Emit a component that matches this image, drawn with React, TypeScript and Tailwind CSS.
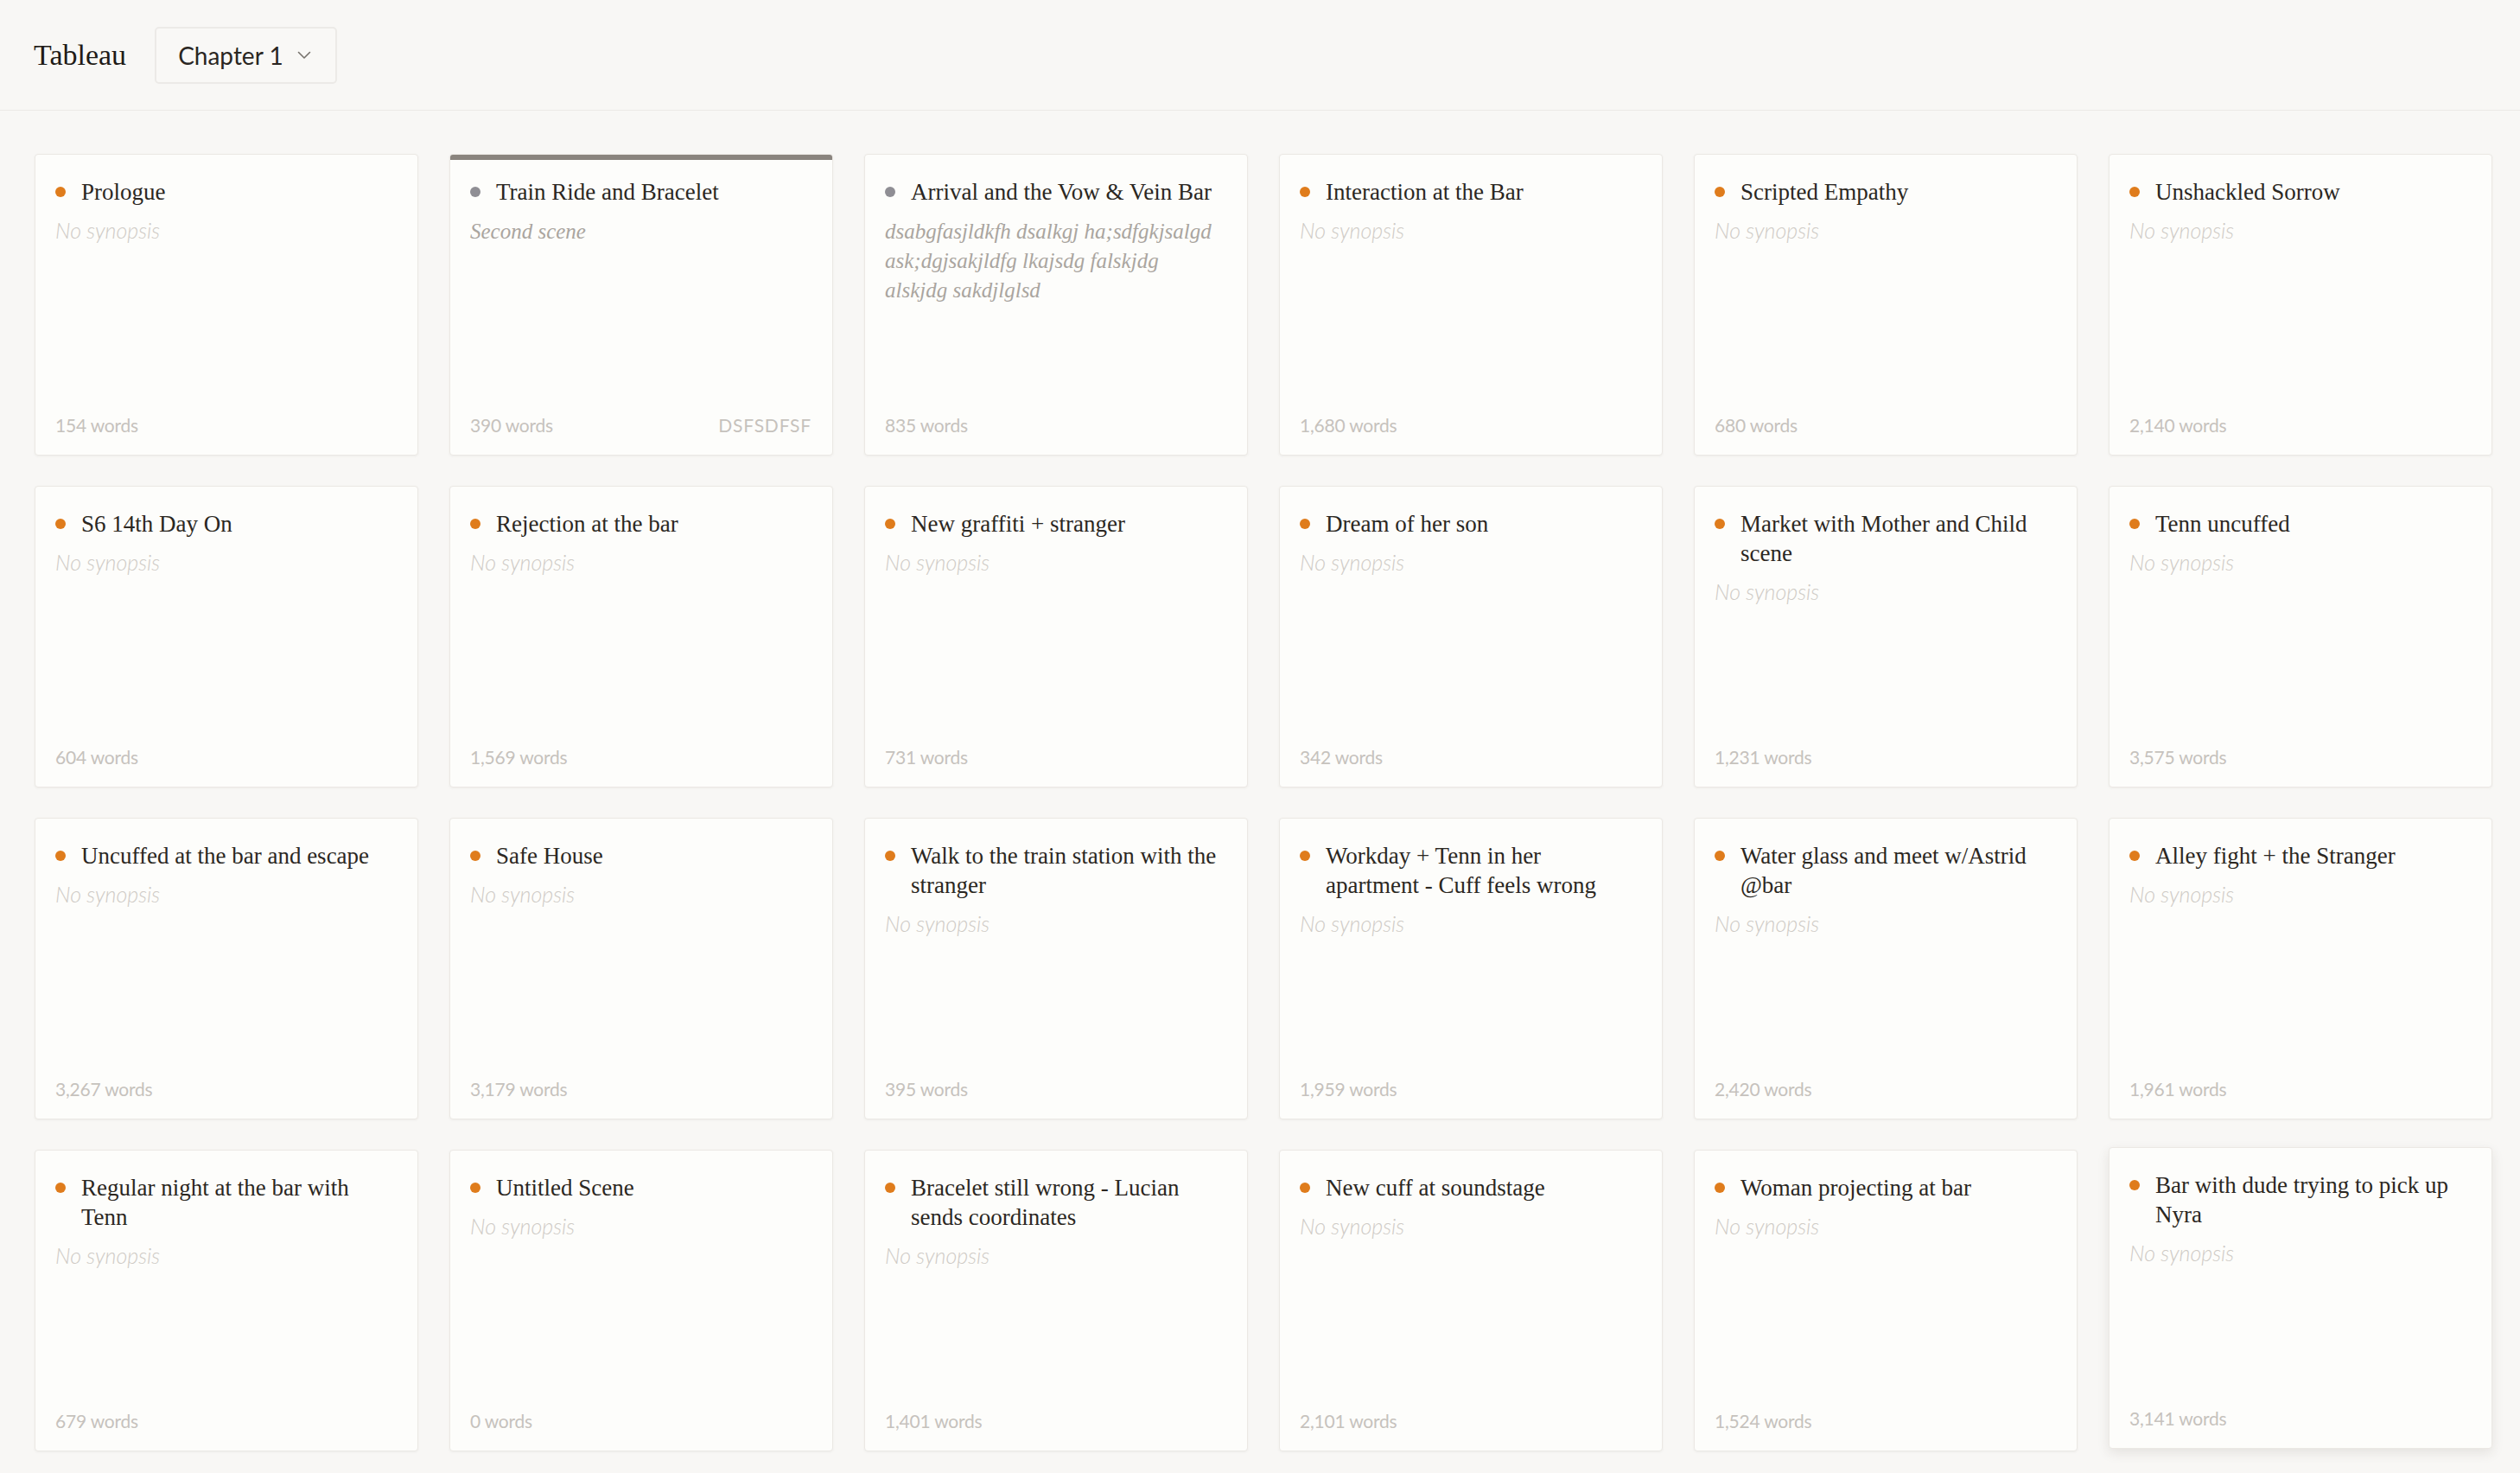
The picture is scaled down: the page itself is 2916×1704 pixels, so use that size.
import React from "react";

type Scene = {
  title: string;
  words: string;
  synopsis?: string;
  dot: "orange" | "gray";
  tag?: string;
  selected?: boolean;
  hovered?: boolean;
};

const scenes: Scene[] = [
  { title: "Prologue", words: "154 words", dot: "orange" },
  { title: "Train Ride and Bracelet", words: "390 words", dot: "gray", synopsis: "Second scene", tag: "DSFSDFSF", selected: true },
  {
    title: "Arrival and the Vow & Vein Bar",
    words: "835 words",
    dot: "gray",
    synopsis: "dsabgfasjldkfh dsalkgj ha;sdfgkjsalgd ask;dgjsakjldfg lkajsdg falskjdg alskjdg sakdjlglsd",
  },
  { title: "Interaction at the Bar", words: "1,680 words", dot: "orange" },
  { title: "Scripted Empathy", words: "680 words", dot: "orange" },
  { title: "Unshackled Sorrow", words: "2,140 words", dot: "orange" },
  { title: "S6 14th Day On", words: "604 words", dot: "orange" },
  { title: "Rejection at the bar", words: "1,569 words", dot: "orange" },
  { title: "New graffiti + stranger", words: "731 words", dot: "orange" },
  { title: "Dream of her son", words: "342 words", dot: "orange" },
  { title: "Market with Mother and Child scene", words: "1,231 words", dot: "orange" },
  { title: "Tenn uncuffed", words: "3,575 words", dot: "orange" },
  { title: "Uncuffed at the bar and escape", words: "3,267 words", dot: "orange" },
  { title: "Safe House", words: "3,179 words", dot: "orange" },
  { title: "Walk to the train station with the stranger", words: "395 words", dot: "orange" },
  { title: "Workday + Tenn in her apartment - Cuff feels wrong", words: "1,959 words", dot: "orange" },
  { title: "Water glass and meet w/Astrid @bar", words: "2,420 words", dot: "orange" },
  { title: "Alley fight + the Stranger", words: "1,961 words", dot: "orange" },
  { title: "Regular night at the bar with Tenn", words: "679 words", dot: "orange" },
  { title: "Untitled Scene", words: "0 words", dot: "orange" },
  { title: "Bracelet still wrong - Lucian sends coordinates", words: "1,401 words", dot: "orange" },
  { title: "New cuff at soundstage", words: "2,101 words", dot: "orange" },
  { title: "Woman projecting at bar", words: "1,524 words", dot: "orange" },
  { title: "Bar with dude trying to pick up Nyra", words: "3,141 words", dot: "orange", hovered: true },
];

const serif = "font-['Liberation_Serif',_'Times_New_Roman',_serif]";
const sans = "font-['Lato',_'Noto_Sans',_sans-serif]";

function Card({ s }: { s: Scene }) {
  return (
    <div
      className={
        "relative flex h-[349px] flex-col overflow-hidden rounded-[4px] border border-[#ebe8e4] bg-[#fdfdfb] pb-[20px] pl-[23px] pr-[24px] pt-[26px] " +
        (s.hovered
          ? "-translate-y-[3px] shadow-[0_5px_14px_rgba(60,50,40,0.10)]"
          : "shadow-[0_1px_3px_rgba(60,50,40,0.05)]")
      }
    >
      {s.selected && <div className="absolute inset-x-0 top-0 h-[6px] bg-[#8a847e]" />}
      <div className="flex items-start">
        <div className="flex h-[34px] w-[30px] shrink-0 items-center">
          <span
            className={
              "block h-[12px] w-[12px] rounded-full " +
              (s.dot === "orange" ? "bg-[#df7c1c]" : "bg-[#8f8e94]")
            }
          />
        </div>
        <div className={`${serif} max-w-[360px] text-[27px] leading-[34px] text-[#2b2722]`}>{s.title}</div>
      </div>
      {s.synopsis ? (
        <div className={`${serif} mt-[12px] text-[25px] italic leading-[34px] text-[#aaa59f]`}>{s.synopsis}</div>
      ) : (
        <div className={`${sans} mt-[10px] text-[25px] font-light italic leading-[34px] text-[#cfcbc6]`}>
          No synopsis
        </div>
      )}
      <div className={`${sans} mt-auto flex items-center justify-between text-[21px] leading-[28px] text-[#c6c2bd]`}>
        <span className="tracking-[-0.01em]">{s.words}</span>
        {s.tag && <span className="tracking-[0.04em]">{s.tag}</span>}
      </div>
    </div>
  );
}

export default function App() {
  return (
    <div className="min-h-screen bg-[#f8f7f5]">
      <header className="flex h-[128px] items-center gap-[33px] border-b border-[#ebe9e6] px-[39px]">
        <div className={`${serif} text-[34px] leading-none text-[#1f1b17]`}>Tableau</div>
        <button
          className={`${sans} flex h-[66px] w-[211px] items-center justify-between rounded-[5px] border-2 border-[#eceae7] bg-[#f9f8f6] pl-[25px] pr-[28px] text-[28px] text-[#2a2622]`}
        >
          <span>Chapter 1</span>
          <svg width="16" height="10" viewBox="0 0 16 10" fill="none">
            <path d="M1.5 1.5 L8 8 L14.5 1.5" stroke="#77736d" strokeWidth="1.6" strokeLinecap="round" strokeLinejoin="round" />
          </svg>
        </button>
      </header>
      <main className="pl-[40px] pr-[32px] pt-[50px] pb-[40px]">
        <div className="grid grid-cols-[repeat(6,444px)] gap-x-[36px] gap-y-[35px]">
          {scenes.map((s, i) => (
            <Card key={i} s={s} />
          ))}
        </div>
      </main>
    </div>
  );
}
